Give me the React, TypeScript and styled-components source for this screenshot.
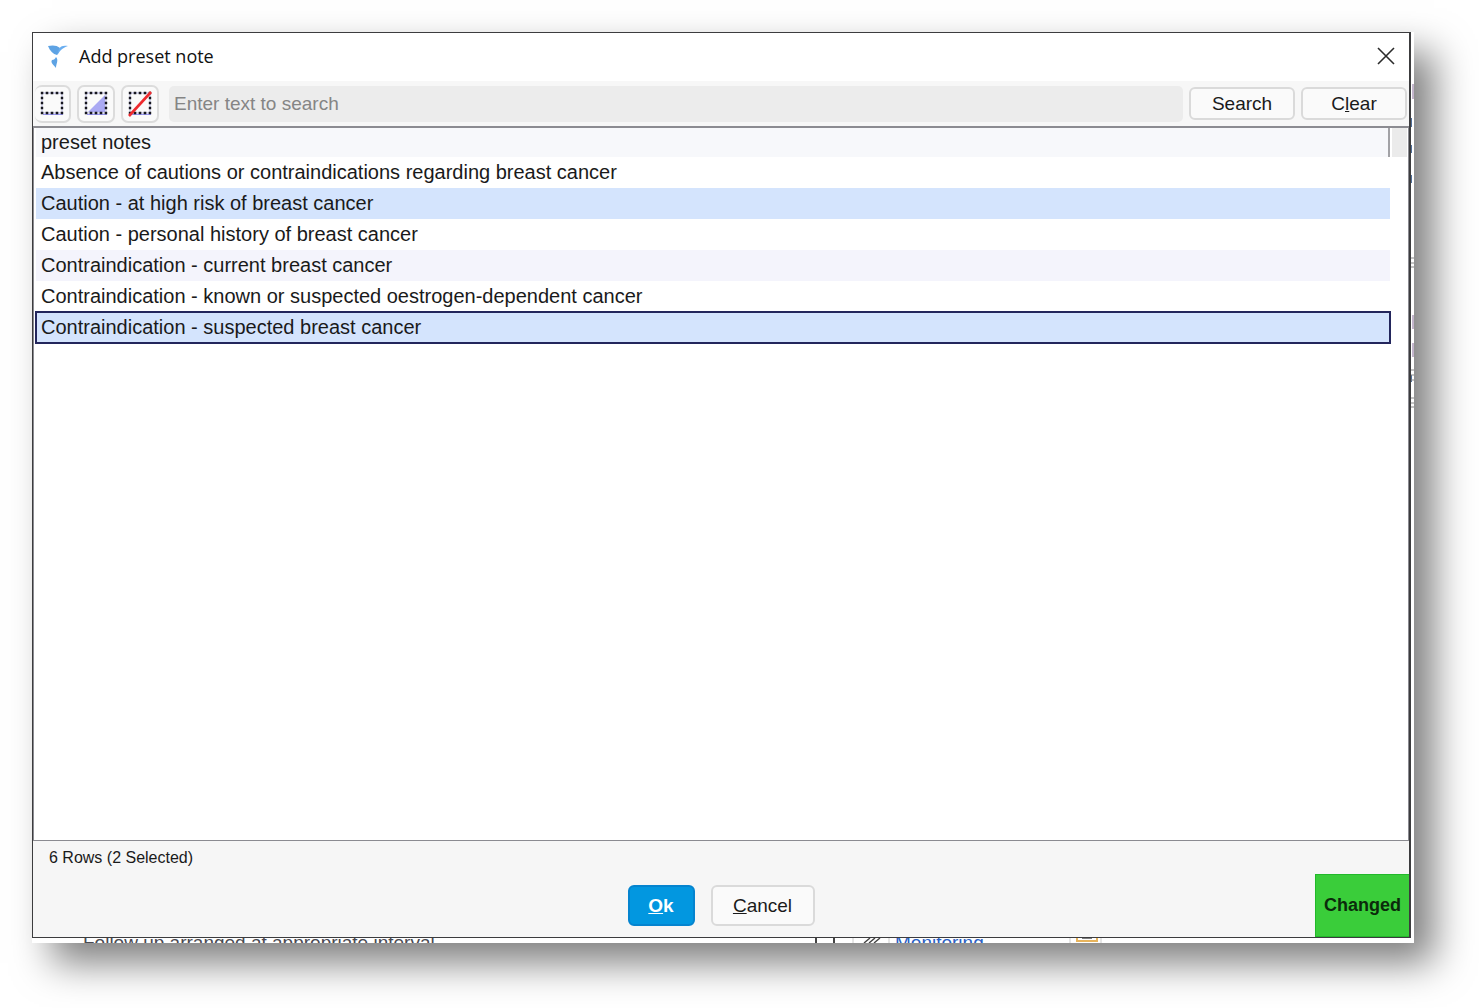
import React, { useState } from "react";
import styled, { createGlobalStyle, css } from "styled-components";

const ui = `"Liberation Sans", Arial, sans-serif`;
const titleFont = `"Open Sans", "Segoe UI", sans-serif`;

const GlobalStyle = createGlobalStyle`
  *, *::before, *::after { box-sizing: border-box; }
  body { margin: 0; background: #fff; color: #1a1a1a; font-family: ${ui}; font-size: 20px; }
  button, input { font: inherit; color: inherit; }
`;

const Stage = styled.main`
  display: flex;
  min-height: 100vh;
  padding: 32px 65px 65px 32px;
  overflow: hidden;
`;

const Sheet = styled.div`
  flex: 1;
  min-width: 0;
  display: grid;
  grid-template-columns: minmax(0, 1fr) 3px;
  grid-template-rows: 1fr 5px;
  background: #fff;
  box-shadow: 20px 20px 36px rgba(0, 0, 0, 0.5);
`;

const Dialog = styled.section`
  display: flex;
  flex-direction: column;
  min-width: 0;
  border: 1px solid #3c3c3e;
  border-right-width: 2px;
  background: #fff;
`;

const PageEdge = styled.svg`
  width: 3px;
  height: 400px;
`;

const PageFoot = styled.div`
  grid-column: 1 / -1;
  display: flex;
  align-items: flex-start;
  height: 5px;
  padding-left: 51px;
  overflow: hidden;
  font-size: 19px;
  line-height: 10px;
  color: #4a4a52;
`;

const FootText = styled.span`
  width: 732px;
  white-space: nowrap;
`;

const FootMarks = styled.svg`
  width: 80px;
  height: 5px;
`;

const FootLink = styled.a`
  width: 174px;
  color: #2a5fc4;
  text-decoration: none;
`;

const TitleBar = styled.header`
  display: flex;
  align-items: center;
  gap: 8px;
  height: 48px;
  padding: 0 14px 2px;
`;

const Title = styled.h1`
  flex: 1;
  margin: 0;
  font: 400 18px/24px ${titleFont};
  color: #111;
`;

const CloseButton = styled.button`
  display: flex;
  padding: 0;
  border: 0;
  background: none;
`;

const Toolbar = styled.form`
  display: flex;
  align-items: center;
  gap: 6px;
  height: 45px;
  padding: 0 2px;
  background: #f7f7f7;
`;

const IconButton = styled.button<{ $flush?: boolean }>`
  display: flex;
  align-items: center;
  justify-content: center;
  flex: none;
  width: 38px;
  height: 38px;
  padding: 0;
  border: 2px solid #dcdcdc;
  border-radius: 7px;
  background: #fafafa;
  ${(p) => p.$flush && css`
    width: 36px;
    border-left: 0;
  `}
`;

const SearchBox = styled.input`
  flex: 1;
  min-width: 0;
  height: 36px;
  margin-left: 4px;
  padding: 0 5px;
  border: 0;
  border-radius: 5px;
  background: #ececec;
  font-size: 19px;
  &::placeholder { color: #858585; opacity: 1; }
`;

const Button = styled.button<{ $primary?: boolean; $tall?: boolean; $width: number }>`
  flex: none;
  width: ${(p) => p.$width}px;
  height: ${(p) => (p.$tall ? 41 : 33)}px;
  padding: 0;
  border: 2px solid ${(p) => (p.$primary ? "#0584cf" : "#dadada")};
  border-radius: 6px;
  background: ${(p) => (p.$primary ? "#0297e0" : "#fafafa")};
  color: ${(p) => (p.$primary ? "#fff" : "#1a1a1a")};
  font-size: 19px;
  font-weight: ${(p) => (p.$primary ? 700 : 400)};
`;

const ListPane = styled.div`
  flex: 1;
  padding-left: 2px;
  border: 1px solid #8b8b91;
  border-top-width: 2px;
  background: #fff;
`;

const Table = styled.table`
  width: 100%;
  border-collapse: separate;
  border-spacing: 0;
  table-layout: fixed;
`;

const HeadCell = styled.th`
  height: 29px;
  padding: 0 5px;
  border-right: 2px solid #a2a2a6;
  background: #f7f8fb;
  font-weight: 400;
  text-align: left;
`;

const HeadGutter = styled.td`
  padding: 0;
  border: 2px solid #fff;
  border-width: 0 1px 0 2px;
  background: #ebebeb;
`;

const NoteCell = styled.td<{ $selected: boolean; $focused: boolean }>`
  height: 31px;
  padding: 0 5px 2px;
  background: #fff;
  line-height: 24px;
  white-space: nowrap;
  cursor: default;
  tr:nth-child(even) > & { background: #f4f4fc; }
  ${(p) => p.$selected && css`
    && , tr:nth-child(even) > && { background: #d4e4fd; }
  `}
  ${(p) => p.$focused && css`
    outline: 2px solid #23265c;
    outline-offset: -1px;
  `}
`;

const Footer = styled.footer`
  display: grid;
  grid-template-columns: 1fr auto 1fr;
  grid-template-rows: 33px 63px;
  background: #f6f6f6;
`;

const Status = styled.div`
  grid-column: 1 / -1;
  padding: 8px 16px;
  font-size: 16px;
  line-height: 18px;
`;

const Actions = styled.div`
  grid-column: 2;
  display: flex;
  align-items: center;
  gap: 16px;
`;

const Changed = styled.strong`
  justify-self: end;
  display: flex;
  align-items: center;
  justify-content: center;
  width: 94px;
  border: 1px solid #22b92a;
  border-right: 0;
  background: #3acd3a;
  color: #0b2a0b;
  font-size: 18px;
`;

const Bird = () => (
  <svg width="24" height="26" viewBox="0 0 24 26" aria-hidden="true">
    <path d="M1 3C5 2 10 2 13 5C12 8 12 10 10 12C6 11 3 8 1 3Z" fill="#5ea3e4" />
    <path d="M12 6C13 3 17 2 21 3C18 4 16 5 14 7C12 9 11 11 10 12Z" fill="#6aaef0" />
    <path d="M9 14C12 17 9 21 9 25C7 22 3 20 5 17C7 17 8 16 9 14Z" fill="#5ea3e4" />
  </svg>
);

const Cross = () => (
  <svg width="18" height="18" viewBox="0 0 18 18" aria-hidden="true">
    <path d="M1 1L17 17M17 1L1 17" stroke="#2b2b2b" strokeWidth="1.6" fill="none" />
  </svg>
);

const Marquee = ({ half, struck }: { half?: boolean; struck?: boolean }) => (
  <svg width="26" height="26" viewBox="0 0 26 26" aria-hidden="true">
    {half && <path d="M22 4V22H4Z" fill="#aaa9f3" />}
    <path d="M4 23H23V4" fill="none" stroke="#9a98f5" strokeWidth="2" />
    <rect x="3" y="2" width="20" height="20" fill="none" stroke="#d8d8ee" strokeWidth="2" />
    <rect x="3" y="2" width="20" height="20" fill="none" stroke="#17171f" strokeWidth="2.4" strokeDasharray="2.6 2.4" strokeDashoffset="1.3" />
    {struck && <path d="M2 25L24 1" stroke="#ee2a2e" strokeWidth="2.6" />}
  </svg>
);

const notes = [
  "Absence of cautions or contraindications regarding breast cancer",
  "Caution - at high risk of breast cancer",
  "Caution - personal history of breast cancer",
  "Contraindication - current breast cancer",
  "Contraindication - known or suspected oestrogen-dependent cancer",
  "Contraindication - suspected breast cancer",
];

export default function App() {
  const [selected, setSelected] = useState<number[]>([1, 5]);
  const [focused, setFocused] = useState(5);
  const [query, setQuery] = useState("");

  const toggle = (i: number) => {
    setFocused(i);
    setSelected((s) => (s.includes(i) ? s.filter((n) => n !== i) : [...s, i]));
  };

  return (
    <>
      <GlobalStyle />
      <Stage>
        <Sheet>
          <Dialog role="dialog" aria-labelledby="title">
            <TitleBar>
              <Bird />
              <Title id="title">Add preset note</Title>
              <CloseButton type="button" aria-label="Close"><Cross /></CloseButton>
            </TitleBar>
            <Toolbar onSubmit={(e) => e.preventDefault()}>
              <IconButton $flush type="button" aria-label="Select all" onClick={() => setSelected(notes.map((_, i) => i))}>
                <Marquee />
              </IconButton>
              <IconButton type="button" aria-label="Invert selection" onClick={() => setSelected((s) => notes.map((_, i) => i).filter((i) => !s.includes(i)))}>
                <Marquee half />
              </IconButton>
              <IconButton type="button" aria-label="Select none" onClick={() => setSelected([])}>
                <Marquee struck />
              </IconButton>
              <SearchBox aria-label="Enter text to search" placeholder="Enter text to search" value={query} onChange={(e) => setQuery(e.target.value)} />
              <Button $width={106}>Search</Button>
              <Button $width={106} type="button" onClick={() => setQuery("")}>C<u>l</u>ear</Button>
            </Toolbar>
            <ListPane>
              <Table>
                <colgroup><col /><col width="18" /></colgroup>
                <thead>
                  <tr><HeadCell scope="col">preset notes</HeadCell><HeadGutter /></tr>
                </thead>
                <tbody>
                  {notes.map((note, i) => (
                    <tr key={note} onClick={() => toggle(i)}>
                      <NoteCell $selected={selected.includes(i)} $focused={focused === i}>{note}</NoteCell>
                    </tr>
                  ))}
                </tbody>
              </Table>
            </ListPane>
            <Footer>
              <Status>{notes.length} Rows ({selected.length} Selected)</Status>
              <Actions>
                <Button $primary $tall $width={67} type="button"><u>O</u>k</Button>
                <Button $tall $width={104} type="button"><u>C</u>ancel</Button>
              </Actions>
              <Changed>Changed</Changed>
            </Footer>
          </Dialog>
          <PageEdge viewBox="0 0 3 400" aria-hidden="true">
            <path d="M2 52V67M2 283V297M2 311V325" stroke="#8a6f9a" strokeWidth="1" />
            <path d="M0 86V95M0 113V121M0 143V151M0 343V350" stroke="#4f6f9a" strokeWidth="2" />
            <path d="M0 226H3M0 231H3M0 235H3M0 338H3M0 343H3M0 348H3M0 366H3M0 371H3M0 375H3" stroke="#888" />
          </PageEdge>
          <PageFoot>
            <FootText>Follow up arranged at appropriate interval</FootText>
            <FootMarks viewBox="0 0 80 5" aria-hidden="true">
              <path d="M1 0V5M19 0V5" stroke="#444" strokeWidth="2" />
              <path d="M38 0V5M74 0V5" stroke="#ccc" />
              <path d="M49 5L55 0M54 5L60 0M59 5L65 0" stroke="#444" strokeWidth="1.4" />
            </FootMarks>
            <FootLink href="#monitoring">Monitoring</FootLink>
            <FootMarks viewBox="0 0 80 5" aria-hidden="true">
              <path d="M1 0V5M32 0V5" stroke="#ccc" />
              <path d="M8 0V3H28V0" stroke="#e8b45c" strokeWidth="2" fill="none" />
              <path d="M13 0H23" stroke="#555" strokeWidth="1.5" />
            </FootMarks>
          </PageFoot>
        </Sheet>
      </Stage>
    </>
  );
}
